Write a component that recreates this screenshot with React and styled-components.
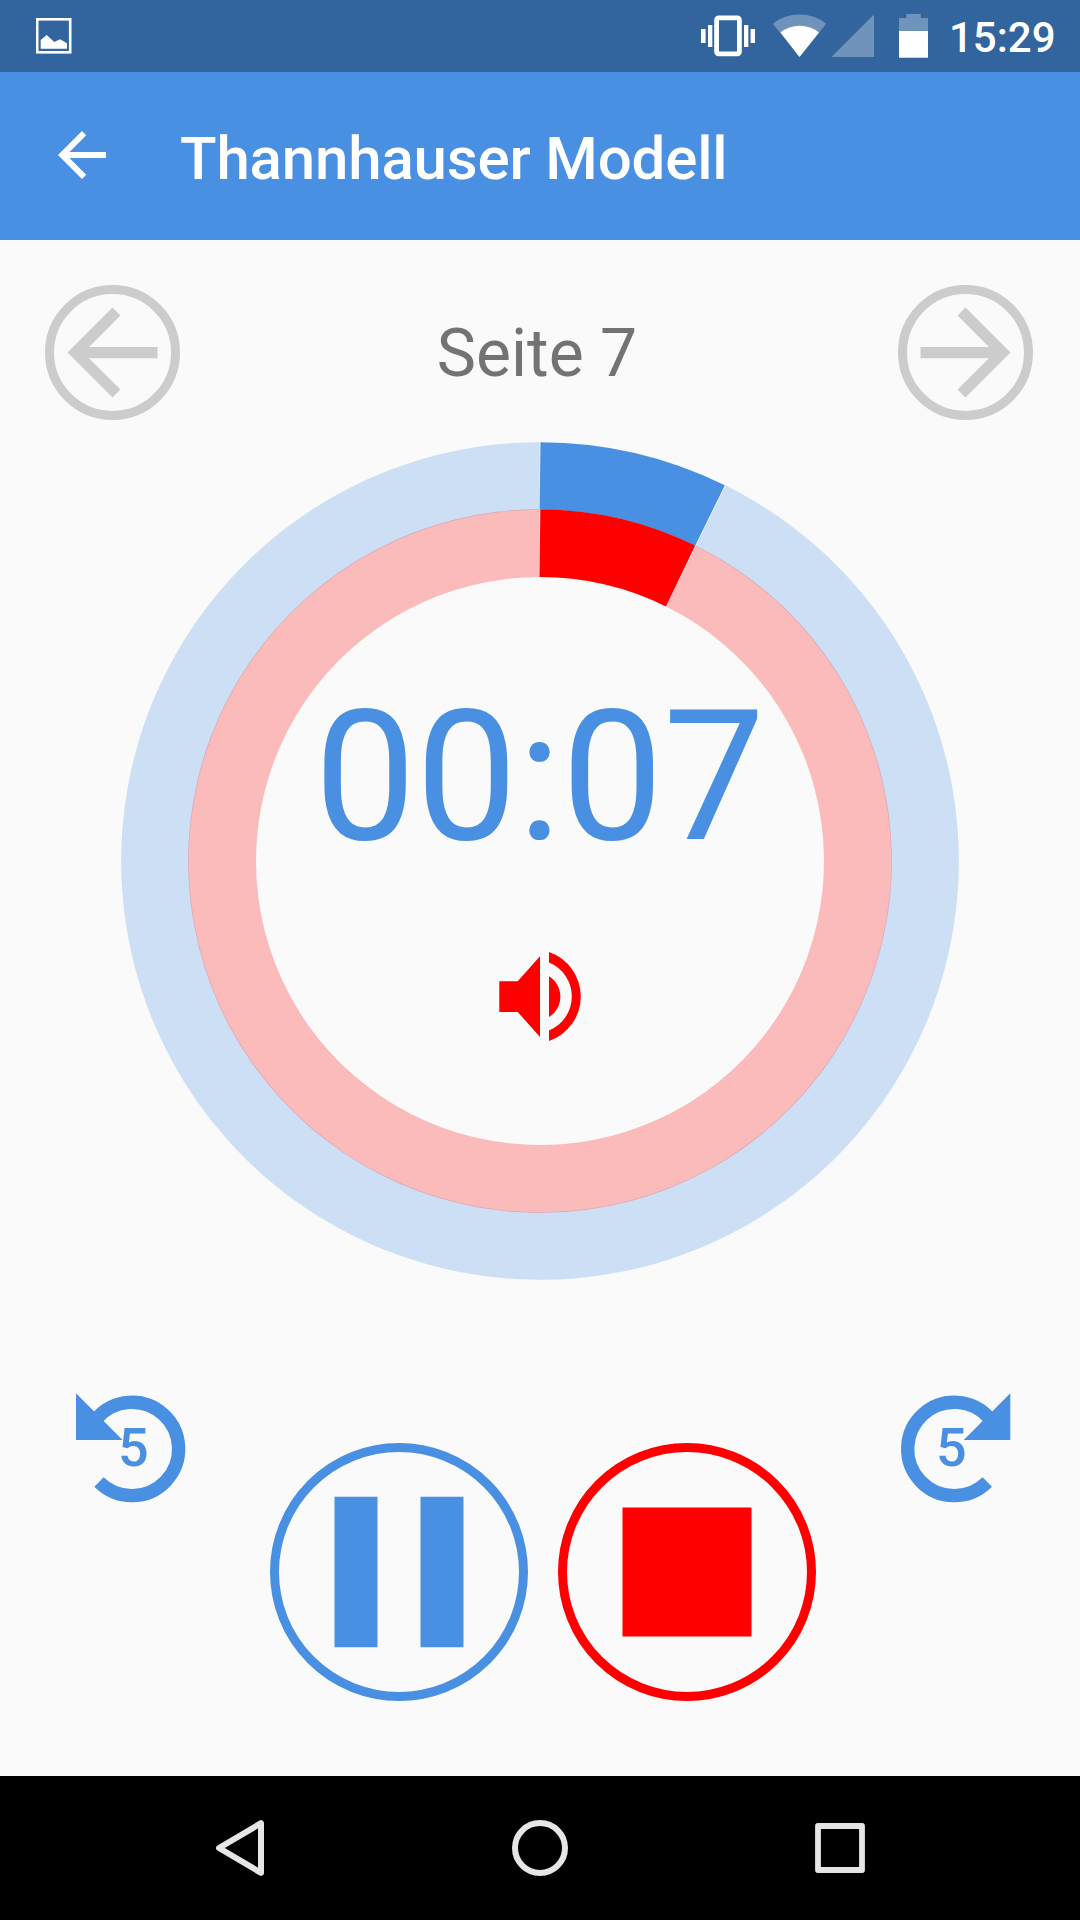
import React from "react";
import styled, { createGlobalStyle } from "styled-components";

const BLUE = "#4a90e2";
const RED = "#ff0000";

const GlobalStyle = createGlobalStyle`
  * { box-sizing: border-box; }
  body { margin: 0; background: #fafafa; }
  svg { display: block; flex: none; }
  button { appearance: none; border: 0; padding: 0; margin: 0; background: none; color: inherit; font: inherit; }
`;

const Screen = styled.div`
  width: 1080px;
  height: 1920px;
  display: flex;
  flex-direction: column;
  overflow: hidden;
  background: #fafafa;
  font-family: Roboto, "Noto Sans", sans-serif;
`;

const StatusBar = styled.header`
  height: 72px;
  flex: none;
  display: flex;
  align-items: flex-start;
  padding: 0 20px 0 36px;
  background: #32659e;
  color: #fff;
`;

const StatusIcons = styled.div`
  display: flex;
  margin-left: auto;
`;

const Clock = styled.span`
  width: 108px;
  margin-left: -3px;
  margin-right: 3px;
  font-size: 42px;
  font-weight: 500;
  line-height: 75px;
  white-space: nowrap;
`;

const AppBar = styled.div`
  height: 168px;
  flex: none;
  display: flex;
  align-items: flex-start;
  gap: 62px;
  padding: 47px 46px 0 46px;
  background: ${BLUE};
  color: #fff;
`;

const Title = styled.h1`
  margin: 5px 0 0;
  font-size: 60px;
  font-weight: 500;
  line-height: 70px;
  letter-spacing: -0.16px;
  white-space: nowrap;
`;

const Content = styled.main`
  flex: 1;
  display: flex;
  flex-direction: column;
  padding-top: 45px;
`;

const PageRow = styled.div`
  display: flex;
  align-items: center;
  justify-content: space-between;
  padding: 0 47px 0 45px;
`;

const PageLabel = styled.span`
  color: #737373;
  font-size: 66px;
  line-height: 76px;
  margin: 2px 4px 0 0;
`;

const RoundButton = styled.button`
  width: ${(p) => p.$size}px;
  height: ${(p) => p.$size}px;
  flex: none;
  display: flex;
  align-items: center;
  justify-content: center;
  border: 9px solid ${(p) => p.$color};
  border-radius: 50%;
  color: ${(p) => p.$color};

  > svg { margin: -9px; }
`;

const Dial = styled.section`
  display: grid;
  width: 838px;
  height: 838px;
  margin: 22px auto 0;

  > * { grid-area: 1 / 1; }
`;

const DialFace = styled.div`
  display: flex;
  flex-direction: column;
  align-items: center;
  padding-top: 244px;
  gap: 84px;
`;

const Readout = styled.span`
  margin-right: 1px;
  color: ${BLUE};
  font-size: 181px;
  line-height: 182px;
  white-space: nowrap;
`;

const Controls = styled.div`
  display: flex;
  align-items: flex-start;
  justify-content: space-between;
  margin-top: 113px;
  padding: 0 69px 0 76px;
`;

const MainControls = styled.div`
  display: flex;
  gap: 30px;
  margin: 50px 1px 0 -1px;
`;

const SkipButton = styled.button`
  display: grid;
  width: 111px;
  height: 111px;
  color: ${BLUE};
  text-align: left;

  > * { grid-area: 1 / 1; }
`;

const SkipAmount = styled.span`
  padding: 28px 0 0 ${(p) => p.$indent}px;
  font-size: 54px;
  font-weight: 500;
  line-height: 54px;
`;

const NavBar = styled.nav`
  height: 144px;
  flex: none;
  display: flex;
  align-items: center;
  justify-content: center;
  background: #000;
  color: #e6e6e6;
`;

const NavButton = styled.button`
  width: 300px;
  height: 144px;
  display: grid;
  place-items: center;
`;

const ARROW_BACK = "M20 11H7.83l5.59-5.59L12 4l-8 8 8 8 1.41-1.41L7.83 13H20v-2z";
const ARROW_FORWARD = "M12 4l-1.41 1.41L16.17 11H4v2h12.17l-5.58 5.59L12 20l8-8z";
const PAUSE = "M6 19h4V5H6v14zm8-14v14h4V5h-4z";
const STOP = "M6 6h12v12H6z";

function Glyph({ d, size }) {
  return (
    <svg width={size} height={size} viewBox="0 0 24 24" fill="currentColor">
      <path d={d} />
    </svg>
  );
}

function point(radius, degrees) {
  const a = (degrees * Math.PI) / 180;
  return `${419 + radius * Math.sin(a)} ${419 - radius * Math.cos(a)}`;
}

function Sector({ inner, outer, from, fromInner = from, to, toInner = to, color, opacity = 1 }) {
  const large = to - from > 180 ? 1 : 0;
  const d = [
    `M${point(outer, from)}`,
    `A${outer} ${outer} 0 ${large} 1 ${point(outer, to)}`,
    `L${point(inner, toInner)}`,
    `A${inner} ${inner} 0 ${large} 0 ${point(inner, fromInner)}Z`,
  ].join("");
  return <path d={d} fill={color} fillOpacity={opacity} />;
}

function ProgressRings({ angle }) {
  return (
    <svg width="838" height="838" viewBox="0 0 838 838">
      <Sector inner={351.2} outer={418.8} from={angle + 0.12} to={359.93} color={BLUE} opacity={0.255} />
      <Sector inner={284} outer={351.9} from={angle + 0.14} to={359.9} color={RED} opacity={0.25} />
      <Sector inner={351.2} outer={418.8} from={0.06} fromInner={-0.05} to={angle} color={BLUE} />
      <Sector inner={284} outer={351.6} from={0.05} fromInner={-0.1} to={angle} toInner={angle + 0.12} color={RED} />
    </svg>
  );
}

function SpeakerIcon() {
  return (
    <svg width="82" height="90" viewBox="499 952 82 90" fill={RED}>
      <path d="M499.3 981.3H517.7L540 956.3V1037L517.7 1012H499.3Z" />
      <path d="M549 976.3A23.9 23.9 0 0 1 549 1017Z" />
      <path d="M549 952.1A46.9 46.9 0 0 1 549 1040.9V1030.4A36.6 36.6 0 0 0 549 962.6Z" />
    </svg>
  );
}

function SkipIcon({ forward }) {
  return (
    <svg width="111" height="111" viewBox="0 0 111 111">
      <g transform={forward ? "translate(110.3 0) scale(-1 1)" : undefined}>
        <path
          d="M20.5 25.6A46.67 46.67 0 1 1 23 89"
          fill="none"
          stroke="currentColor"
          strokeWidth="13.33"
        />
        <path d="M0 0.3V47H46.6Z" fill="currentColor" />
      </g>
    </svg>
  );
}

function ImageIcon() {
  return (
    <svg width="36" height="72" viewBox="36 0 36 72">
      <rect x="37.2" y="19.3" width="33" height="33" fill="none" stroke="#fff" strokeWidth="2.6" />
      <path d="M40.7 40L46.7 35L54.3 42L60 39.3L67 43.3V48.8H40.7Z" fill="#fff" />
    </svg>
  );
}

function SystemIcons() {
  return (
    <svg width="251" height="72" viewBox="701 0 251 72" fill="#fff">
      <rect x="716.6" y="17.8" width="22.8" height="36" rx="2" fill="none" stroke="#fff" strokeWidth="4.8" />
      <rect x="701" y="29" width="4.6" height="14" />
      <rect x="708" y="25" width="4.3" height="22" />
      <rect x="744" y="25" width="4.3" height="22" />
      <rect x="750.6" y="29" width="4.4" height="14" />
      <path d="M772.8 23.7A43 43 0 0 1 826.2 23.7L799.5 57Z" fillOpacity="0.3" />
      <path d="M780.5 32.5A31 31 0 0 1 819 32.5L799.5 57Z" />
      <path d="M831.5 57H874V14.5Z" fillOpacity="0.3" />
      <path d="M899 31V18H906.3V14H920.7V18H928V31Z" fillOpacity="0.3" />
      <path d="M899 31H928V57.7H899Z" />
    </svg>
  );
}

export default function App() {
  return (
    <Screen>
      <GlobalStyle />
      <StatusBar>
        <ImageIcon />
        <StatusIcons>
          <SystemIcons />
          <Clock>15:29</Clock>
        </StatusIcons>
      </StatusBar>

      <AppBar>
        <Glyph d={ARROW_BACK} size={72} />
        <Title>Thannhauser Modell</Title>
      </AppBar>

      <Content>
        <PageRow>
          <RoundButton $size={135} $color="#cccccc" aria-label="Zurück">
            <Glyph d={ARROW_BACK} size={135} />
          </RoundButton>
          <PageLabel>Seite 7</PageLabel>
          <RoundButton $size={135} $color="#cccccc" aria-label="Weiter">
            <Glyph d={ARROW_FORWARD} size={135} />
          </RoundButton>
        </PageRow>

        <Dial>
          <ProgressRings angle={26.2} />
          <DialFace>
            <Readout>00:07</Readout>
            <SpeakerIcon />
          </DialFace>
        </Dial>

        <Controls>
          <SkipButton>
            <SkipIcon />
            <SkipAmount $indent={42}>5</SkipAmount>
          </SkipButton>
          <MainControls>
            <RoundButton $size={258} $color={BLUE} aria-label="Pause">
              <Glyph d={PAUSE} size={258} />
            </RoundButton>
            <RoundButton $size={258} $color={RED} aria-label="Stopp">
              <Glyph d={STOP} size={258} />
            </RoundButton>
          </MainControls>
          <SkipButton>
            <SkipIcon forward />
            <SkipAmount $indent={36}>5</SkipAmount>
          </SkipButton>
        </Controls>
      </Content>

      <NavBar>
        <NavButton aria-label="Back">
          <svg width="60" height="60" viewBox="210 1818 60 60" fill="none" stroke="currentColor" strokeWidth="6" strokeLinejoin="round">
            <path d="M261 1823.2V1872.8L219 1848Z" />
          </svg>
        </NavButton>
        <NavButton aria-label="Home">
          <svg width="60" height="60" viewBox="0 0 60 60" fill="none" stroke="currentColor" strokeWidth="6">
            <circle cx="30" cy="30" r="25" />
          </svg>
        </NavButton>
        <NavButton aria-label="Recents">
          <svg width="60" height="60" viewBox="0 0 60 60" fill="none" stroke="currentColor" strokeWidth="5.8" strokeLinejoin="round">
            <rect x="8" y="8" width="44" height="44" />
          </svg>
        </NavButton>
      </NavBar>
    </Screen>
  );
}
